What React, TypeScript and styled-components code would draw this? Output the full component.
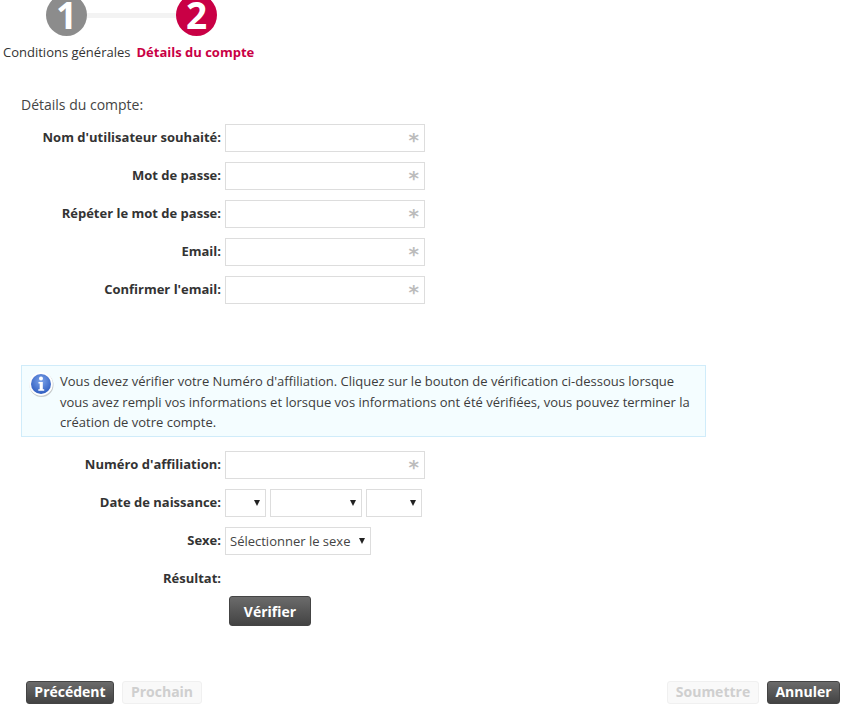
import styled, { createGlobalStyle } from "styled-components"

const GlobalStyle = createGlobalStyle`
  html, body {
    margin: 0;
    padding: 0;
    background: #fff;
    overflow: hidden;
  }
  body {
    font-family: "Open Sans", "Liberation Sans", sans-serif;
    font-size: 13px;
    color: #333;
  }
`

const Page = styled.div`
  width: 843px;
  height: 707px;
  overflow: hidden;
`

const Stepper = styled.div`
  display: flex;
  align-items: center;
  margin: -6px 0 0 46px;
  width: 171px;
`

const Circle = styled.div<{ $active?: boolean }>`
  flex: none;
  box-sizing: border-box;
  width: 41px;
  height: 42px;
  padding-top: 6px;
  border-radius: 50%;
  background: ${(p) => (p.$active ? "#c90045" : "#8c8c8c")};
  color: #fff;
  font-size: 37px;
  font-weight: 700;
  line-height: 30px;
  text-align: center;
`

const StepLine = styled.div`
  flex: 1;
  height: 5px;
  background: #f3f3f3;
`

const StepLabels = styled.div`
  display: flex;
  gap: 6px;
  margin: 6px 0 0 3px;
  line-height: 20px;
`

const StepLabel = styled.span<{ $active?: boolean }>`
  color: ${(p) => (p.$active ? "#c90045" : "#333")};
  font-weight: ${(p) => (p.$active ? 700 : 400)};
`

const SectionTitle = styled.div`
  margin: 33px 0 0 21px;
  font-size: 14px;
  line-height: 20px;
  color: #444;
`

const Rows = styled.div`
  display: flex;
  flex-direction: column;
  gap: 10px;
`

const AccountRows = styled(Rows)`
  margin-top: 9px;
`

const AffiliateRows = styled(Rows)`
  margin-top: 14px;
`

const Row = styled.div`
  display: flex;
  align-items: flex-start;
  gap: 4px;
  min-height: 28px;
`

const Label = styled.div`
  width: 221px;
  text-align: right;
  font-size: 13px;
  font-weight: 700;
  line-height: 26px;
  color: #333;
`

const Field = styled.div`
  position: relative;
  width: 200px;
  height: 28px;
`

const TextInput = styled.input`
  box-sizing: border-box;
  display: block;
  width: 100%;
  height: 100%;
  border: 1px solid #ddd;
  background: #fff;
  outline: none;
`

const Required = styled.span`
  position: absolute;
  top: 6px;
  right: 6px;
  font-family: "DejaVu Sans", sans-serif;
  font-size: 20px;
  font-weight: 700;
  line-height: 20px;
  color: #bcbcbc;
  pointer-events: none;
`

const SelectGroup = styled.div`
  display: flex;
  gap: 4px;
`

const SelectBox = styled.div<{ $width: number }>`
  position: relative;
  width: ${(p) => p.$width}px;
  height: 28px;

  &:after {
    content: "";
    position: absolute;
    top: 11px;
    right: 6.5px;
    border-left: 3.5px solid transparent;
    border-right: 3.5px solid transparent;
    border-top: 6px solid #222;
    pointer-events: none;
  }
`

const Select = styled.select`
  box-sizing: border-box;
  display: block;
  width: 100%;
  height: 100%;
  padding: 0 0 0 4px;
  border: 1px solid #ddd;
  border-radius: 0;
  background: #fff;
  appearance: none;
  outline: none;
  font-family: inherit;
  font-size: 13px;
  color: #444;
`

const ResultRow = styled(Row)`
  min-height: 0;
  height: 21px;
`

const InfoBox = styled.div`
  display: flex;
  gap: 6px;
  box-sizing: border-box;
  width: 685px;
  height: 72px;
  margin: 61px 0 0 21px;
  padding: 5px 8px 0 7px;
  border: 1px solid #d0ecfa;
  background: #f4fdff;
  line-height: 20.5px;
  color: #3c3c3c;
`

const InfoIcon = styled.svg`
  flex: none;
  width: 25px;
  height: 25px;
  margin-top: 1px;
`

const VerifyWrap = styled.div`
  margin: 0 0 0 229px;
`

const Button = styled.button<{ $disabled?: boolean }>`
  box-sizing: border-box;
  padding: 0;
  border-radius: 3px;
  font-family: inherit;
  font-size: 14px;
  font-weight: 700;
  text-align: center;
  border: 1px solid ${(p) => (p.$disabled ? "#f0f0f0" : "#444")};
  background: ${(p) => (p.$disabled ? "#f9f9f9" : "linear-gradient(#6b6b6b, #434343)")};
  color: ${(p) => (p.$disabled ? "#cfcfcf" : "#fff")};
`

const VerifyButton = styled(Button)`
  display: block;
  width: 82px;
  height: 30px;
`

const Footer = styled.div`
  display: flex;
  justify-content: space-between;
  margin: 55px 3px 0 26px;
`

const ButtonGroup = styled.div`
  display: flex;
  gap: 8px;
`

const NavButton = styled(Button)<{ $width: number }>`
  width: ${(p) => p.$width}px;
  height: 23px;
  padding-bottom: 2px;
  line-height: 18px;
`

const Dropdown = ({ width, text }: { width: number; text?: string }) => (
  <SelectBox $width={width}>
    <Select defaultValue="">
      <option value="">{text ?? ""}</option>
    </Select>
  </SelectBox>
)

const InputRow = ({ label }: { label: string }) => (
  <Row>
    <Label>{label}</Label>
    <Field>
      <TextInput type="text" />
      <Required>*</Required>
    </Field>
  </Row>
)

export default function App() {
  return (
    <Page>
      <GlobalStyle />
      <Stepper>
        <Circle>1</Circle>
        <StepLine />
        <Circle $active>2</Circle>
      </Stepper>
      <StepLabels>
        <StepLabel>Conditions générales</StepLabel>
        <StepLabel $active>Détails du compte</StepLabel>
      </StepLabels>

      <SectionTitle>Détails du compte:</SectionTitle>
      <AccountRows>
        <InputRow label="Nom d'utilisateur souhaité:" />
        <InputRow label="Mot de passe:" />
        <InputRow label="Répéter le mot de passe:" />
        <InputRow label="Email:" />
        <InputRow label="Confirmer l'email:" />
      </AccountRows>

      <InfoBox>
        <InfoIcon viewBox="0 0 25 25">
          <defs>
            <radialGradient id="infoBlue" cx="50%" cy="35%" r="65%">
              <stop offset="0%" stopColor="#7da4ea" />
              <stop offset="100%" stopColor="#2f5dc0" />
            </radialGradient>
          </defs>
          <circle cx="12.5" cy="13" r="12" fill="#9a9a9a" opacity="0.5" />
          <circle cx="12" cy="12" r="11.8" fill="#fff" />
          <circle cx="12" cy="12" r="10" fill="url(#infoBlue)" />
          <circle cx="12" cy="6.5" r="2" fill="#fff" />
          <path d="M9.5 10h4.3v7.2h1.4v1.5H9.3v-1.5h1.4v-5.7H9.5z" fill="#fff" />
        </InfoIcon>
        <div>
          Vous devez vérifier votre Numéro d'affiliation. Cliquez sur le bouton de vérification ci-dessous lorsque
          vous avez rempli vos informations et lorsque vos informations ont été vérifiées, vous pouvez terminer la
          création de votre compte.
        </div>
      </InfoBox>

      <AffiliateRows>
        <InputRow label="Numéro d'affiliation:" />
        <Row>
          <Label>Date de naissance:</Label>
          <SelectGroup>
            <Dropdown width={41} />
            <Dropdown width={92} />
            <Dropdown width={56} />
          </SelectGroup>
        </Row>
        <Row>
          <Label>Sexe:</Label>
          <Dropdown width={146} text="Sélectionner le sexe" />
        </Row>
        <ResultRow>
          <Label>Résultat:</Label>
        </ResultRow>
        <VerifyWrap>
          <VerifyButton>Vérifier</VerifyButton>
        </VerifyWrap>
      </AffiliateRows>

      <Footer>
        <ButtonGroup>
          <NavButton $width={88}>Précédent</NavButton>
          <NavButton $width={80} $disabled>Prochain</NavButton>
        </ButtonGroup>
        <ButtonGroup>
          <NavButton $width={92} $disabled>Soumettre</NavButton>
          <NavButton $width={73}>Annuler</NavButton>
        </ButtonGroup>
      </Footer>
    </Page>
  )
}
